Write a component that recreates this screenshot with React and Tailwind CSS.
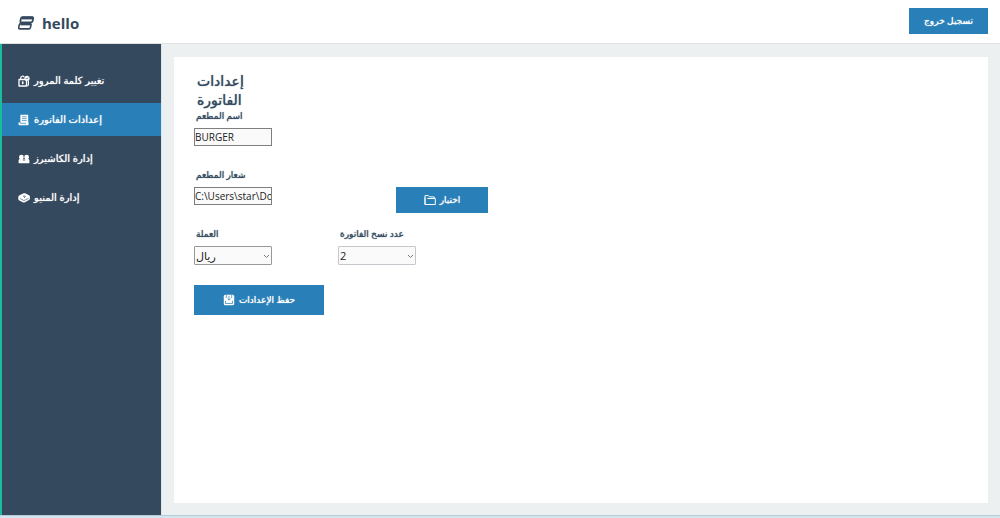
import React from "react";

const LogoIcon = () => (
  <svg width="17" height="16" viewBox="0 0 18 16" fill="none" stroke="#34495e" strokeLinejoin="round" aria-hidden="true">
    <path d="M4.700 1.800h10.300c.9 0 1.300.5 1.100 1.400l-.7 3c-.2.800-.7 1.200-1.500 1.200H3.600c-.9 0-1.300-.5-1.100-1.400l.7-3c.2-.8.700-1.200 1.500-1.200Z" strokeWidth="1.900" />
    <path d="M4.200 2.700h11.600" strokeWidth="3" />
    <path d="M2.900 8.600h9.800c.9 0 1.300.5 1.100 1.400l-.7 3c-.2.800-.7 1.200-1.500 1.200H1.900c-.9 0-1.300-.5-1.100-1.400l.6-3c.2-.8.700-1.200 1.500-1.200Z" strokeWidth="1.700" />
    <path d="M2.500 9h11" strokeWidth="3" />
  </svg>
);

const LockIcon = () => (
  <svg width="12" height="12" viewBox="0 0 12 12" fill="none" stroke="#fff" aria-hidden="true">
    <path d="M1 4.500h7.500v6.500H1Z" strokeWidth="1.300" strokeLinejoin="round" />
    <path d="M2.700 4.500V3.100a1.900 1.900 0 0 1 3.500-1" strokeWidth="1.200" />
    <path d="M4.700 6.400v2.700" strokeWidth="1.600" />
    <circle cx="9" cy="3.300" r="2.600" fill="#fff" stroke="none" />
    <path d="m7.900 3.300.8.800 1.500-1.600" stroke="#34495e" strokeWidth=".8" />
    <path d="M10.400 5.500v4c0 .8-.4 1.500-1.300 1.500" strokeWidth="1.200" />
  </svg>
);

const ReceiptIcon = () => (
  <svg width="12" height="12" viewBox="0 0 12 12" aria-hidden="true">
    <path d="M2.400.8h7.800v7.500h.4v1.500c0 1-.5 1.500-1.400 1.500H2c-1 0-1.500-.5-1.500-1.500V8.400h1.900Z" fill="#fff" />
    <path d="M4 2.800h4.700M4 4.700h4.700M4 6.600h4.700M2 9.300h5.500v1" fill="none" stroke="#2980b9" strokeWidth=".7" />
  </svg>
);

const PeopleIcon = () => (
  <svg width="12" height="12" viewBox="0 0 12 12" fill="#fff" aria-hidden="true">
    <circle cx="3.400" cy="4.200" r="2.400" />
    <circle cx="8.600" cy="4.200" r="2.400" />
    <path d="M.6 10.300V7.700C.6 6.700 1.300 6 2.300 6h7.400c1 0 1.700.7 1.700 1.700v2.600Z" />
    <path d="M6 4v4M4.700 7h2.600" stroke="#34495e" strokeWidth=".5" />
  </svg>
);

const MenuBookIcon = () => (
  <svg width="12" height="12" viewBox="0 0 12 12" aria-hidden="true">
    <path d="M.3 5.200C.3 4 1 3.500 2 3l3.200-1.500c.8-.4 1.600-.4 2.400 0L11 3.200c.7.400.9.900.9 1.700v1.800c0 .7-.3 1.100-.9 1.400l-4 2.200c-.8.400-1.500.4-2.300 0L1.200 8.400C.6 8 .3 7.600.3 7Z" fill="#fff" />
    <path d="m2 6.500 4 2.100 4.500-2.300" fill="none" stroke="#34495e" strokeWidth=".6" />
    <path d="M5 4.600c.4-.8 2.200-.9 2.400 0 .1.500-.7.700-1.200 1.100" fill="none" stroke="#34495e" strokeWidth=".8" />
  </svg>
);

const FolderIcon = () => (
  <svg width="12" height="12" viewBox="0 0 12 12" fill="none" stroke="#fff" strokeLinejoin="round" aria-hidden="true">
    <path d="M1 10.500V1.600h3.300l1.200 1.300h4.700v1.600" />
    <path d="M3.300 4.500h8v6H1V3.500" />
  </svg>
);

const SaveIcon = () => (
  <svg width="12" height="12" viewBox="0 0 12 12" aria-hidden="true">
    <rect x=".8" y=".8" width="10.400" height="10.400" rx="1.500" fill="#fff" />
    <path d="M3.300 1v3M8.700 1v3M6 2v4M4.500 4.600 6 6.100l1.500-1.500M2.500 6.800v2.700h7V6.800" fill="none" stroke="#2980b9" strokeWidth=".7" />
  </svg>
);

const navItems = [
  { label: "تغيير كلمة المرور", Icon: LockIcon },
  { label: "إعدادات الفاتورة", Icon: ReceiptIcon, active: true },
  { label: "إدارة الكاشيرز", Icon: PeopleIcon },
  { label: "إدارة المنيو", Icon: MenuBookIcon },
];

const strong = "font-medium [text-shadow:0_0_1px_currentColor]";

const fieldBox =
  "block h-[18px] w-[78px] border border-[#7f7f7f] bg-[#fafafa] text-[10px] leading-4 text-[#222]";

function Field({ id, label, children }) {
  return (
    <div className="flex w-[144px] flex-col gap-[6px]">
      <label htmlFor={id} className={`pl-[2px] text-[9px] leading-3 whitespace-nowrap text-[#34495e] ${strong}`}>
        {label}
      </label>
      {children}
    </div>
  );
}

function Select({ id, value, options, tone }) {
  return (
    <div className="relative w-[78px]">
      <select
        id={id}
        defaultValue={value}
        className={`block h-[19px] w-full appearance-none rounded-[1px] border bg-[#fafafa] pl-px text-[11px] leading-4 text-[#222] ${tone}`}
      >
        {options.map((o) => (
          <option key={o}>{o}</option>
        ))}
      </select>
      <svg className="pointer-events-none absolute top-[8px] right-[2px]" width="7" height="5" viewBox="0 0 7 5" fill="none" stroke="#777" aria-hidden="true">
        <path d="m1 1 2.500 2.500L6 1" />
      </svg>
    </div>
  );
}

export default function App() {
  return (
    <div className="flex min-h-screen flex-col bg-[#ecf0f1] font-['Open_Sans','DejaVu_Sans',sans-serif]">
      <header className="flex h-[44px] items-center justify-between border-b border-[#dde3e6] bg-white pr-3 pb-px pl-[18px]">
        <div className="flex items-center gap-[7px] pt-1">
          <LogoIcon />
          <span className="text-[15px] leading-5 font-bold text-[#34495e]">hello</span>
        </div>
        <button type="button" className={`h-[26px] w-[79px] bg-[#2980b9] text-[9px] text-white ${strong}`}>
          تسجيل خروج
        </button>
      </header>

      <div className="flex flex-1">
        <nav className="flex w-[162px] shrink-0 flex-col gap-[6px] border-r border-l-2 border-r-[#dce6ec] border-l-[#1abc9c] bg-[#34495e] pt-5">
          {navItems.map(({ label, Icon, active }) => (
            <a
              key={label}
              href="#"
              aria-current={active ? "page" : undefined}
              className={`flex h-[33px] items-center gap-1 pl-4 text-[10px] text-white ${strong} ${active ? "bg-[#2980b9]" : ""}`}
            >
              <Icon />
              <span dir="rtl">{label}</span>
            </a>
          ))}
        </nav>

        <main className="flex flex-1 pt-[13px] pr-3 pb-3 pl-3">
          <form className="flex flex-1 flex-col items-start bg-white px-5 pt-[14px]" onSubmit={(e) => e.preventDefault()}>
            <h1 dir="rtl" className={`mb-px ml-[3px] w-[58px] text-left text-[14px] leading-[19px] text-[#34495e] ${strong}`}>
              إعدادات الفاتورة
            </h1>
            <div className="flex flex-col gap-[23px]">
              <Field id="name" label="اسم المطعم">
                <input id="name" type="text" defaultValue="BURGER" className={fieldBox} />
              </Field>
              <div className="flex items-end">
                <Field id="logo" label="شعار المطعم">
                  <input id="logo" type="text" defaultValue="C:\Users\star\Downloads\logo.png" className={fieldBox} />
                </Field>
                <div className="ml-[58px] h-[18px]">
                  <button type="button" className={`flex h-[26px] w-[92px] items-center justify-center gap-1 bg-[#2980b9] text-[9px] text-white ${strong}`}>
                    <FolderIcon />
                    <span>اختيار</span>
                  </button>
                </div>
              </div>
              <div className="flex">
                <Field id="currency" label="العملة">
                  <Select id="currency" value="ريال" options={["ريال"]} tone="border-[#999]" />
                </Field>
                <Field id="copies" label="عدد نسخ الفاتورة">
                  <Select id="copies" value="2" options={["1", "2", "3"]} tone="border-[#c4c8cc]" />
                </Field>
              </div>
            </div>
            <button type="submit" className={`mt-5 flex h-[30px] w-[130px] items-center justify-center gap-1 bg-[#2980b9] text-[9px] text-white ${strong}`}>
              <SaveIcon />
              <span>حفظ الإعدادات</span>
            </button>
          </form>
        </main>
      </div>
      <div className="h-[3px] border-t border-[#b4cdd8] bg-[#d3e6ee]" />
    </div>
  );
}
